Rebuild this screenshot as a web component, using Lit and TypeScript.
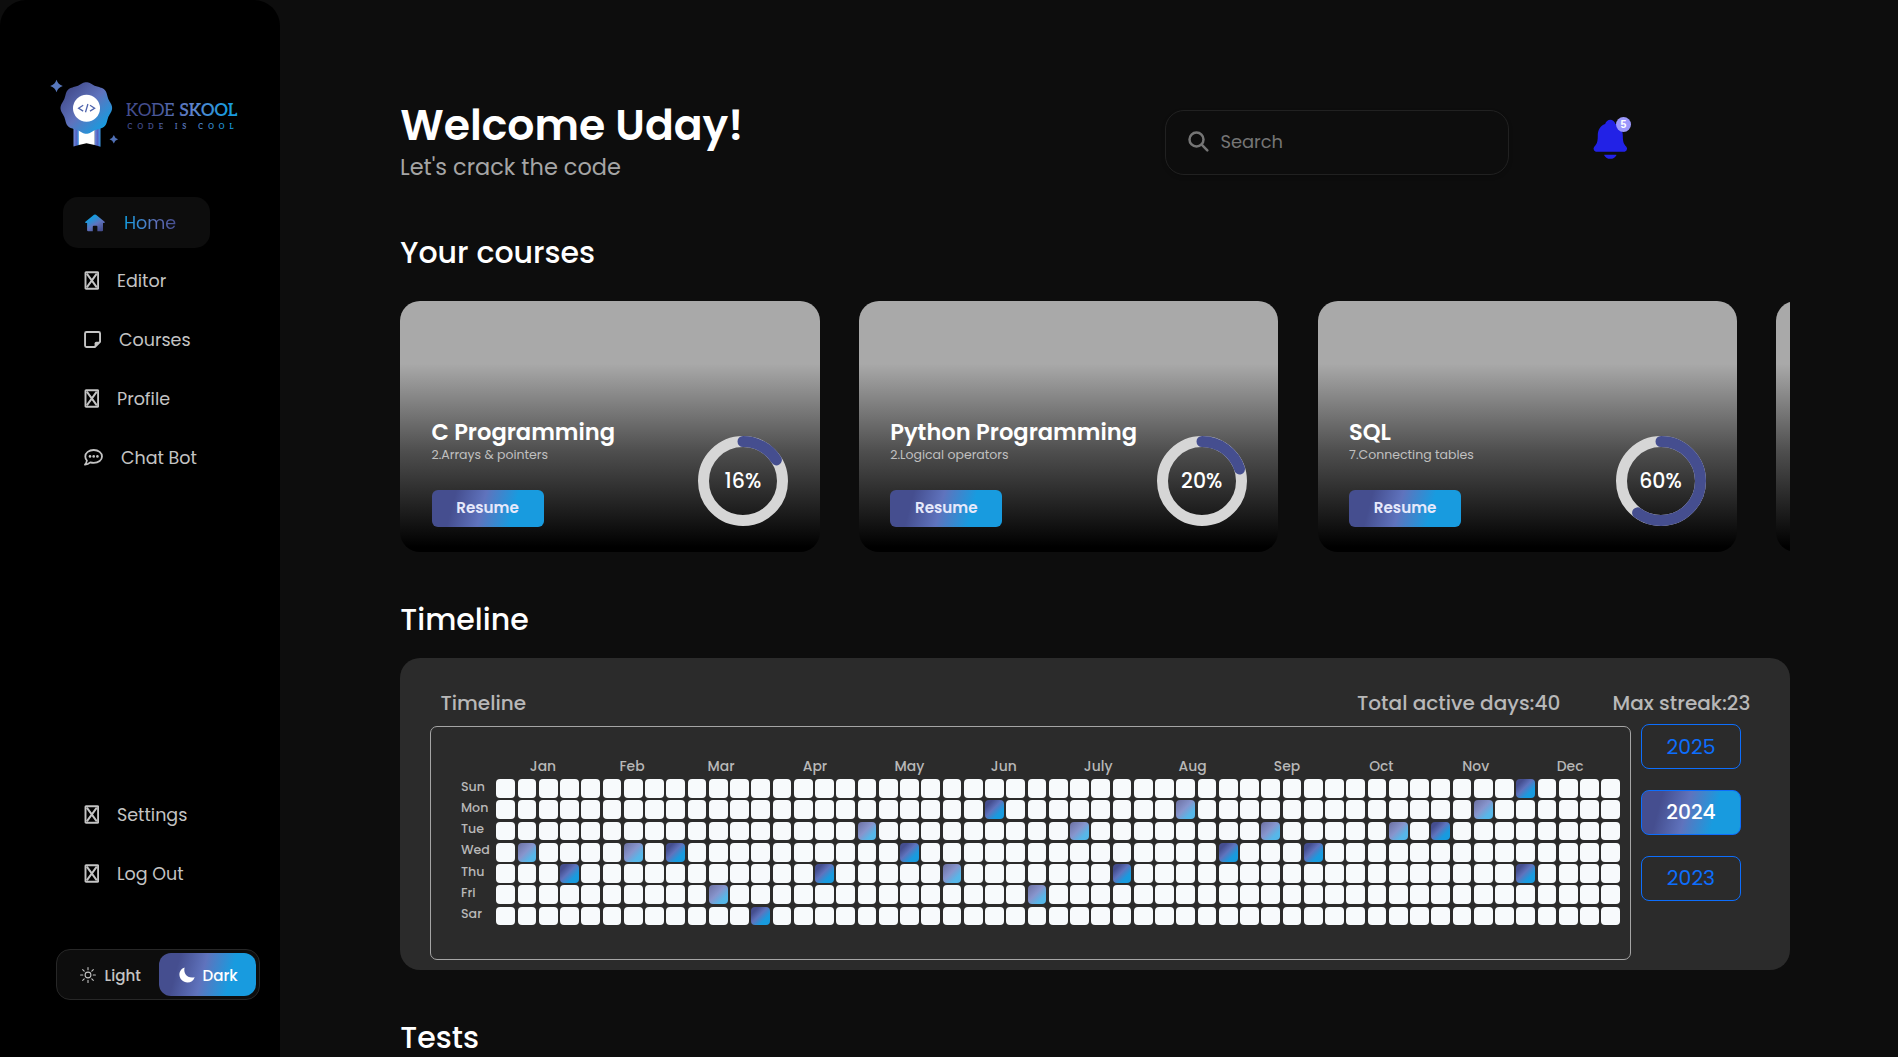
import { LitElement, html, css, svg, nothing } from "lit";
import { customElement } from "lit/decorators.js";
import { classMap } from "lit/directives/class-map.js";

type NavItem = { icon: string; text: string };

const NAV_TOP: NavItem[] = [
  { icon: "home", text: "Home" },
  { icon: "box", text: "Editor" },
  { icon: "sticky", text: "Courses" },
  { icon: "box", text: "Profile" },
  { icon: "chat", text: "Chat Bot" },
];
const NAV_BOTTOM: NavItem[] = [
  { icon: "box", text: "Settings" },
  { icon: "box", text: "Log Out" },
];

const COURSES = [
  { title: "C Programming", sub: "2.Arrays & pointers", pct: 16 },
  { title: "Python Programming", sub: "2.Logical operators", pct: 20 },
  { title: "SQL", sub: "7.Connecting tables", pct: 60 },
];

const MONTHS = ["Jan", "Feb", "Mar", "Apr", "May", "Jun", "July", "Aug", "Sep", "Oct", "Nov", "Dec"];
const DAYS = ["Sun", "Mon", "Tue", "Wed", "Thu", "Fri", "Sar"];

/* Weeks with activity, keyed "week:day". */
const ACTIVE: Record<string, "low" | "high"> = {
  "1:3": "low", "3:4": "high", "6:3": "low", "8:3": "high", "10:5": "low", "12:6": "high",
  "15:4": "high", "17:2": "low", "19:3": "high", "21:4": "low", "23:1": "high", "25:5": "low",
  "27:2": "low", "29:4": "high", "32:1": "low", "34:3": "high", "36:2": "low", "38:3": "high",
  "42:2": "low", "44:2": "high", "46:1": "low", "48:0": "high", "48:4": "high",
};

const scallop = (cx: number, cy: number) => {
  const pts: string[] = [];
  for (let i = 0; i < 160; i++) {
    const a = (i / 160) * Math.PI * 2 - Math.PI / 2;
    const r = 24.8 + 1 * Math.cos(8 * (a + Math.PI / 2));
    pts.push(`${(cx + r * Math.cos(a)).toFixed(2)} ${(cy + r * Math.sin(a)).toFixed(2)}`);
  }
  return `M${pts.join("L")}Z`;
};
const star = (cx: number, cy: number, r: number) => {
  const k = r * 0.24;
  return `M${cx} ${cy - r}Q${cx + k} ${cy - k} ${cx + r} ${cy}Q${cx + k} ${cy + k} ${cx} ${cy + r}Q${cx - k} ${cy + k} ${cx - r} ${cy}Q${cx - k} ${cy - k} ${cx} ${cy - r}Z`;
};

const icon = (name: string) => {
  switch (name) {
    case "home":
      return html`<svg width="20" height="18" viewBox="0 0 20 18">
        <defs><linearGradient id="hg" x1="0.1" y1="0" x2="0.8" y2="1">
          <stop offset=".25" stop-color="#189bdf" /><stop offset=".6" stop-color="#5f73bd" /><stop offset=".95" stop-color="#454e8f" />
        </linearGradient></defs>
        <path fill="url(#hg)" d="M9 .8Q10 0 11 .8L19.6 7.8Q20.2 8.5 19.4 9H18V16.2Q18 17.3 17 17.3H12.4V12.6Q12.4 11.7 11.5 11.7H8.7Q7.8 11.7 7.8 12.6V17.3H3.2Q2.1 17.3 2.1 16.2V9H.6Q-.2 8.5.4 7.8Z" />
      </svg>`;
    case "box":
      return html`<svg width="15" height="19" viewBox="0 0 15 19" fill="none" stroke="currentColor">
        <rect x="1.5" y="1.2" width="12.6" height="16.6" rx=".6" stroke-width="1.9" />
        <path d="M2.8 2.6L12.8 16.4M12.8 2.6L2.8 16.4" stroke-width="2" />
      </svg>`;
    case "sticky":
      return html`<svg width="17" height="17" viewBox="0 0 16 16" fill="currentColor">
        <path fill="none" stroke="currentColor" stroke-width="1.8" stroke-linejoin="round" d="M2.3 1H13.7Q15.1 1 15.1 2.3V10.2L10.2 15.1H2.3Q1 15.1 1 13.7V2.3Q1 1 2.3 1Z" />
        <path d="M10 15.5V11.5Q10 10 11.5 10H15.5Z" />
      </svg>`;
    case "chat":
      return html`<svg width="19" height="17" viewBox="0 0 19 17">
        <path fill="none" stroke="currentColor" stroke-width="1.8" stroke-linejoin="round" d="M9.7 1C14.5 1 18 3.8 18 7.4S14.5 13.8 9.7 13.8C8.5 13.8 7.3 13.6 6.3 13.3C4.9 14.6 3.1 15.5 1 15.6C2.1 14.4 2.7 13.1 2.9 11.5C1.9 10.4 1.3 9 1.3 7.4C1.3 3.8 4.9 1 9.7 1Z" />
        <circle cx="6" cy="7.4" r="1.3" fill="currentColor" /><circle cx="9.7" cy="7.4" r="1.3" fill="currentColor" /><circle cx="13.4" cy="7.4" r="1.3" fill="currentColor" />
      </svg>`;
    case "sun":
      return html`<svg width="16" height="16" viewBox="0 0 16 16" fill="none" stroke="currentColor" stroke-width="1.1" stroke-linecap="round">
        <circle cx="8" cy="8" r="2.9" />
        <path d="M8 .6V2.8M8 13.2V15.4M.6 8H2.8M13.2 8H15.4M2.7 2.7L4.2 4.2M11.8 11.8L13.3 13.3M2.7 13.3L4.2 11.8M11.8 4.2L13.3 2.7" />
      </svg>`;
    case "moon":
      return html`<svg width="16" height="16" viewBox="0 0 16 16"><path fill="currentColor" d="M5.6.5C4.1 6.5 8.5 12 15.7 10.2C14.7 13.5 11.8 15.5 8.5 15.5C4 15.5.4 12 .4 7.6C.4 4.4 2.5 1.5 5.6.5Z" /></svg>`;
    default:
      return nothing;
  }
};

@customElement("app-root")
class AppRoot extends LitElement {
  static styles = css`
    :host {
      --grad: linear-gradient(105deg, #454e8f 20%, #5f73bd 45%, #189bdf 72%);
      display: block;
      height: 1057px;
      overflow: hidden;
      background: #0d0d0d;
      color: #fff;
      font-family: Poppins, Inter, "Open Sans", sans-serif;
      white-space: nowrap;
    }
    * { box-sizing: border-box; }
    svg { display: block; flex: none; }
    .page { display: flex; height: 100%; }

    .sidebar {
      width: 280px; height: 1057px; flex: none; background: #000;
      border-radius: 26px 26px 0 0; display: flex; flex-direction: column;
    }
    .logo { margin: 74px 0 0 46px; }
    .nav { display: flex; flex-direction: column; margin-left: 63px; }
    .nav.top { margin-top: 43px; }
    .nav.bottom { margin-top: 298px; }
    .item { height: 59px; padding-left: 21px; display: flex; align-items: center; gap: 18px; color: #c4c4c4; }
    .navtext { font-size: 17.5px; line-height: 24px; margin-top: 1px; }
    .item.active {
      width: 147px; height: 51px; margin-bottom: 3px; padding-left: 22px; gap: 19px;
      background: #0d0d0d; border-radius: 15px;
    }
    .active .navtext {
      color: transparent; background: linear-gradient(90deg, #189bdf 5%, #5f73bd 60%, #454e8f 100%);
      -webkit-background-clip: text; background-clip: text;
    }
    .theme {
      margin: 46px 0 0 56px; width: 204px; height: 51px; border: 1px solid #272727; border-radius: 14px;
      background: #0d0d0d; display: flex; align-items: center; padding: 0 3px 0 22.5px;
      font-weight: 500; font-size: 15.1px; line-height: 20px; color: #c4c4c4;
    }
    .light { margin: 2px 0 0 9px; }
    .dark { margin-left: auto; width: 97px; height: 43px; border-radius: 12px; background: var(--grad); color: #fff; display: flex; align-items: center; padding-left: 20px; }
    .darktext { margin: 2px 0 0 7.5px; }

    .main { width: 1390px; margin-left: 120px; padding-top: 100px; flex: none; }
    .header { display: flex; height: 82px; align-items: flex-start; }
    .hello { width: 764px; }
    .h1 { font-size: 42.5px; line-height: 50px; font-weight: 600; margin-left: .2px; }
    .lead { font-size: 22.45px; line-height: 30px; margin: 2px 0 0 0; color: #a5a5a5; }
    .search {
      margin: 10px 0 0 1px; width: 344px; height: 65px; border: 1px solid #212121; border-radius: 19px;
      display: flex; align-items: center; padding: 0 0 2px 22px; gap: 11.4px; color: #757575;
      box-shadow: 0 2px 4px rgba(0, 0, 0, .15); font-size: 17.9px; line-height: 24px;
    }
    .bell { position: relative; margin: 16.5px 0 0 79px; }
    .badge {
      position: absolute; left: 28px; top: .5px; width: 15px; height: 15px; border-radius: 50%; background: #9b98fb;
      text-align: center; font-family: "Liberation Sans", sans-serif; font-size: 10.5px; line-height: 15px; font-weight: 700;
    }
    .h2 { font-size: 30px; line-height: 41px; font-weight: 500; margin: 47px 0 0 .3px; }
    .header + .h2 { margin-top: 50px; }

    .courses { display: flex; gap: 39.3px; margin-top: 28px; overflow: hidden; }
    .course {
      width: 419.5px; height: 251px; flex: none; border-radius: 20px; padding: 0 31.6px 25px 31.5px;
      background: linear-gradient(#a9a9a9 25%, #4e4e4e 60%, #000 98%);
      display: flex; align-items: flex-end; justify-content: space-between;
    }
    .title { font-size: 22.6px; line-height: 28px; font-weight: 600; margin-left: -.1px; }
    .sub { font-size: 12.5px; line-height: 17px; color: #c0c0c0; }
    .resume {
      margin-top: 27px; width: 112px; height: 37px; border-radius: 6px; background: var(--grad); color: #e6e9fb;
      display: flex; align-items: center; justify-content: center; padding-bottom: 2px;
      font-size: 15.15px; line-height: 20px; font-weight: 600;
    }
    .ring { width: 90px; height: 90px; margin-bottom: 1.3px; display: grid; place-items: center; flex: none; }
    .ring > * { grid-area: 1 / 1; }
    .pct { font-size: 20.5px; line-height: 28px; font-weight: 500; }

    .panel { margin-top: 18px; height: 312px; background: #2b2b2b; border-radius: 20px; padding: 31px 0 0 30px; color: #b8b8b8; }
    .panelhead { display: flex; height: 37px; font-size: 20.05px; line-height: 28px; font-weight: 500; padding: 0 39.7px 0 10.4px; }
    .total { margin-left: auto; }
    .streak { margin-left: 52.3px; }
    .body { display: flex; align-items: flex-start; gap: 10px; }
    .cal { width: 1201px; height: 234px; border: 1px solid #a5a5a5; border-radius: 7px; padding: 31px 0 0 30px; }
    .months {
      display: grid; grid-template-columns: repeat(3, 89px) 96.7px repeat(8, 94.4px);
      padding-left: 37.5px; height: 21.2px; justify-items: center; font-size: 13.9px; line-height: 16px; font-weight: 500;
    }
    .months > :nth-child(4) { margin-left: 2.3px; }
    .grid { display: flex; }
    .days { width: 35.3px; font-size: 12.6px; line-height: 21.25px; font-weight: 500; margin-top: -3.5px; }
    .weeks { display: grid; grid-auto-flow: column; grid-template-rows: repeat(7, 18.75px); grid-auto-columns: 18.75px; gap: 2.5px; }
    .cell { background: #f7fafc; border-radius: 4px; }
    .low { background: linear-gradient(135deg, #7278ab 10%, #8795cd 45%, #56b7e9 75%); }
    .high { background: linear-gradient(135deg, #454e8f 20%, #5f73bd 45%, #189bdf 72%); }
    .years { display: flex; flex-direction: column; gap: 21.5px; margin-top: -2px; }
    .year { width: 100px; height: 44.5px; border: 1px solid #0d6efd; border-radius: 8px; display: grid; place-items: center; color: #0d6efd; font-size: 20.4px; line-height: 28px; }
    .year:first-child { padding-top: 1px; }
    .year.on { background: var(--grad) border-box; color: #fff; font-size: 20.2px; font-weight: 500; }
  `;

  logo() {
    return html`<svg class="logo" width="200" height="80" viewBox="46 74 200 80">
      <defs>
        <linearGradient id="lg" x1="0" y1="0" x2="1" y2="1"><stop offset=".15" stop-color="#454e8f" /><stop offset=".5" stop-color="#5f73bd" /><stop offset=".85" stop-color="#189bdf" /></linearGradient>
        <linearGradient id="tg" gradientUnits="userSpaceOnUse" x1="126" y1="0" x2="238" y2="0"><stop offset=".2" stop-color="#454e8f" /><stop offset=".6" stop-color="#5f83cd" /><stop offset=".9" stop-color="#189bdf" /></linearGradient>
        <linearGradient id="rg" x1="0" y1="0" x2="1" y2="0"><stop offset="0" stop-color="#6f8fdd" /><stop offset=".5" stop-color="#5560c0" /><stop offset="1" stop-color="#3d9be8" /></linearGradient>
      </defs>
      <path d="M73.5 127V146.5L79 145V127Z" fill="url(#rg)" />
      <path d="M94.5 127V145L100.5 146.7V127Z" fill="url(#rg)" />
      <path d="M78.8 127V145L86.5 143.2L94.6 145V127Z" fill="#fff" />
      <path d=${scallop(86.3, 108)} fill="url(#lg)" />
      <circle cx="86.5" cy="108.2" r="13.5" fill="#fff" />
      <path d="M83.2 105.3L78.6 108.2L83.2 111.1M90 105.3L94.6 108.2L90 111.1M87.9 104L85.5 112.3" fill="none" stroke="#4f64ae" stroke-width="1.3" />
      <path d=${star(56.5, 86, 6.3)} fill="#5878bd" />
      <path d=${star(113.8, 139.3, 4.3)} fill="#5070b5" />
      <g fill="url(#tg)" font-family="Aleo, 'Roboto Slab', 'DejaVu Serif', serif">
        <text x="126" y="116" font-size="17.3" font-weight="400" textLength="48.5" lengthAdjust="spacingAndGlyphs">KODE</text>
        <text x="179.2" y="116" font-size="17.3" font-weight="600" textLength="58.2" lengthAdjust="spacingAndGlyphs">SKOOL</text>
        <text x="127.5" y="129" font-size="7.2" font-weight="600" textLength="106" lengthAdjust="spacing">CODE IS COOL</text>
      </g>
    </svg>`;
  }

  ring(pct: number) {
    const r = 39.5;
    const c = 2 * Math.PI * r;
    return html`<div class="ring">
      <svg width="90" height="90" viewBox="0 0 90 90" fill="none" stroke-width="11">
        <circle cx="45" cy="45" r=${r} stroke="#d6d6d6" />
        ${svg`<circle cx="45" cy="45" r=${r} stroke="#454e8f" stroke-linecap="round" stroke-dasharray="${(c * pct) / 100} ${c}" transform="rotate(-90 45 45)" />`}
      </svg>
      <span class="pct">${pct}%</span>
    </div>`;
  }

  cells() {
    const out = [];
    for (let w = 0; w < 53; w++)
      for (let d = 0; d < 7; d++) {
        const a = ACTIVE[`${w}:${d}`];
        out.push(html`<div class=${classMap({ cell: true, low: a === "low", high: a === "high" })}></div>`);
      }
    return out;
  }

  navItem(n: NavItem, active: boolean) {
    return html`<div class=${classMap({ item: true, active })}>${icon(n.icon)}<span class="navtext">${n.text}</span></div>`;
  }

  render() {
    return html`<div class="page">
      <aside class="sidebar">
        ${this.logo()}
        <nav class="nav top">${NAV_TOP.map((n, i) => this.navItem(n, i === 0))}</nav>
        <nav class="nav bottom">${NAV_BOTTOM.map((n) => this.navItem(n, false))}</nav>
        <div class="theme">${icon("sun")}<span class="light">Light</span><div class="dark">${icon("moon")}<span class="darktext">Dark</span></div></div>
      </aside>
      <main class="main">
        <div class="header">
          <div class="hello"><div class="h1">Welcome Uday!</div><div class="lead">Let's crack the code</div></div>
          <div class="search">
            <svg width="21" height="21" viewBox="0 0 21 21" fill="none" stroke="currentColor" stroke-width="2.5" stroke-linecap="round"><circle cx="8.5" cy="8.5" r="7" /><path d="M13.7 13.7L19.3 19.3" /></svg>
            <span>Search</span>
          </div>
          <div class="bell">
            <svg width="44.6" height="44.6" viewBox="0 0 512 512" fill="#2222e6"><path d="M440.08 341.31c-1.66-2-3.29-4-4.89-5.93-22-26.61-35.31-42.67-35.31-118 0-39-9.33-71-27.72-95-13.56-17.73-31.89-31.18-56.05-41.12a3 3 0 01-.82-.67C306.6 51.49 282.82 32 256 32s-50.59 19.49-59.28 48.56a3.13 3.13 0 01-.81.65c-56.38 23.21-83.78 67.74-83.78 136.14 0 75.36-13.29 91.42-35.31 118-1.6 1.93-3.23 3.89-4.89 5.93a35.16 35.16 0 00-4.65 37.62c6.17 13 19.32 21.07 34.33 21.07H410.5c14.94 0 28-8.06 34.19-21a35.17 35.17 0 00-4.61-37.66zM256 480a80.06 80.06 0 0070.44-42.13 4 4 0 00-3.54-5.87H189.12a4 4 0 00-3.55 5.87A80.06 80.06 0 00256 480z" /></svg>
            <span class="badge">5</span>
          </div>
        </div>
        <div class="h2">Your courses</div>
        <div class="courses">
          ${COURSES.map((c) => html`<article class="course">
            <div><div class="title">${c.title}</div><div class="sub">${c.sub}</div><div class="resume">Resume</div></div>
            ${this.ring(c.pct)}
          </article>`)}
          <article class="course"></article>
        </div>
        <div class="h2">Timeline</div>
        <section class="panel">
          <div class="panelhead"><span>Timeline</span><span class="total">Total active days:40</span><span class="streak">Max streak:23</span></div>
          <div class="body">
            <div class="cal">
              <div class="months">${MONTHS.map((m) => html`<span>${m}</span>`)}</div>
              <div class="grid">
                <div class="days">${DAYS.map((d) => html`<div>${d}</div>`)}</div>
                <div class="weeks">${this.cells()}</div>
              </div>
            </div>
            <div class="years">
              ${["2025", "2024", "2023"].map((y) => html`<div class=${classMap({ year: true, on: y === "2024" })}>${y}</div>`)}
            </div>
          </div>
        </section>
        <div class="h2">Tests</div>
      </main>
    </div>`;
  }
}
